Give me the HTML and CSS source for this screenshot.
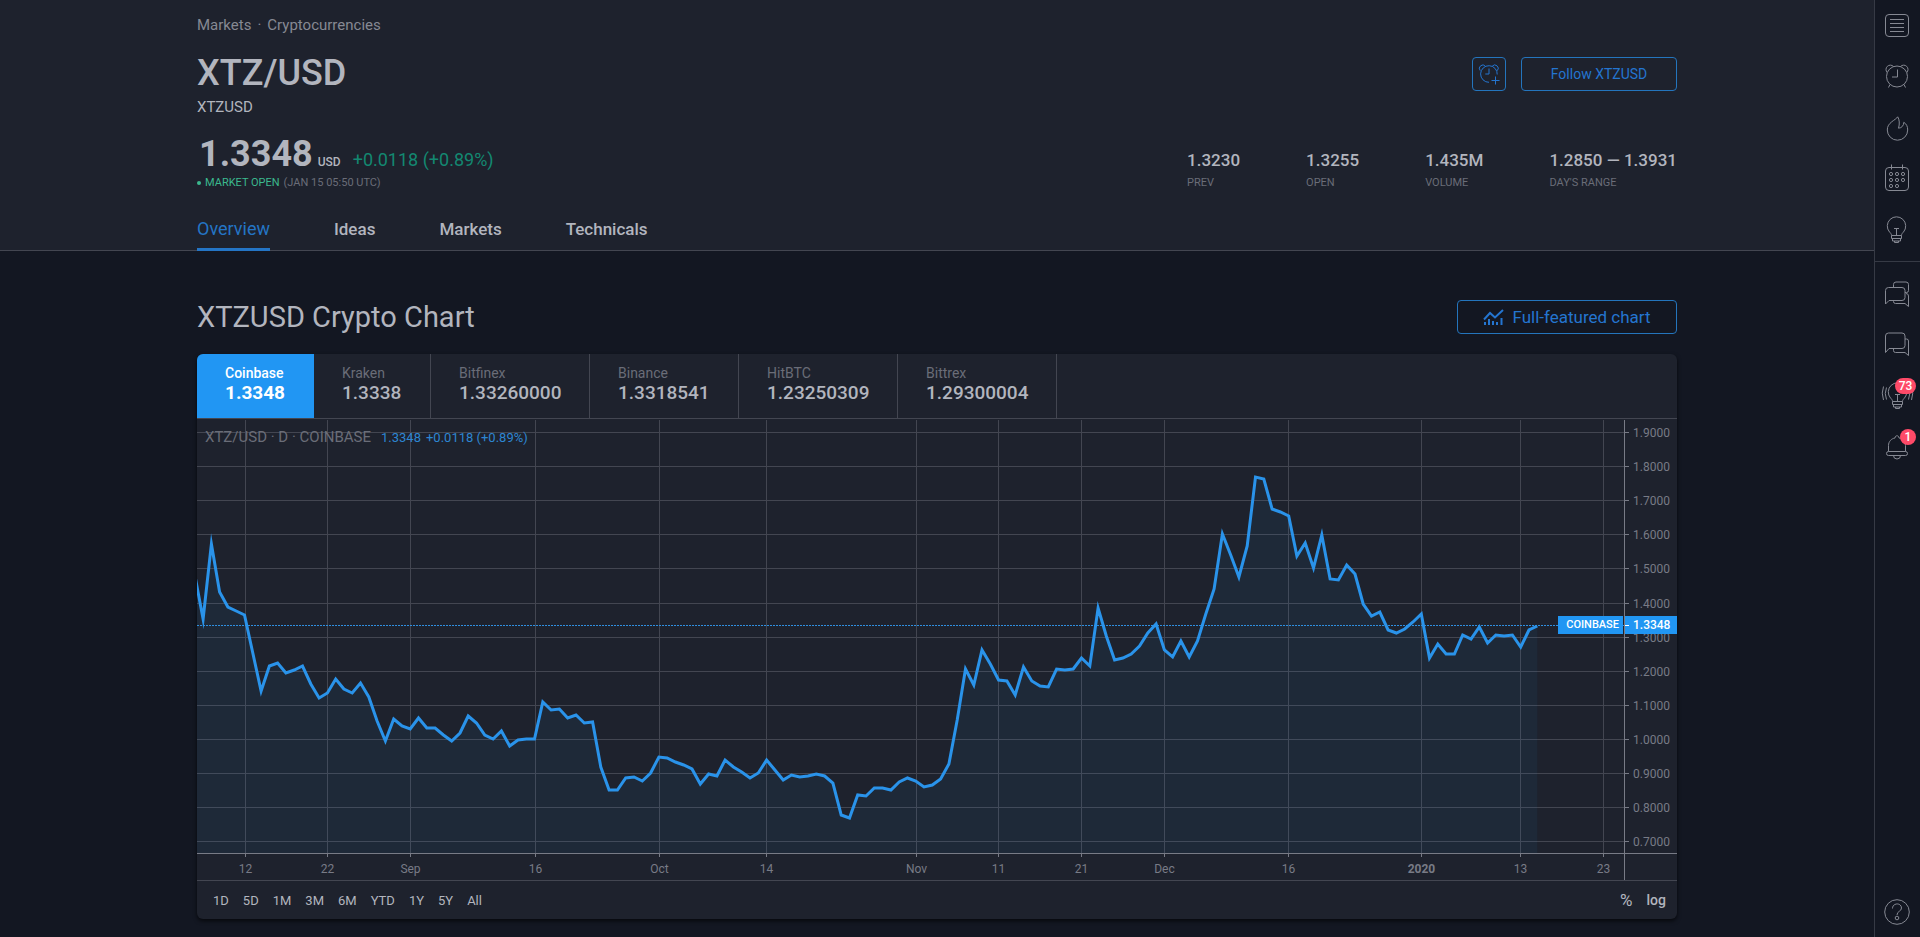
FILE: index.html
```html
<!DOCTYPE html>
<html lang="en">
<head>
<meta charset="utf-8">
<title>XTZ/USD</title>
<link rel="stylesheet" href="styles.css">
</head>
<body>
<div class="page">
  <div class="content">
    <header class="header">
      <div class="container">
        <nav class="breadcrumbs" aria-label="Breadcrumbs"><a href="#">Markets</a><span>·</span><a href="#">Cryptocurrencies</a></nav>
        <div class="title-row">
          <h1 class="title">XTZ/USD</h1>
          <div class="actions">
            <button class="btn btn-icon" type="button" aria-label="Create alert">
              <svg class="icon" width="24" height="24" viewBox="0 0 24 24"><path d="M3.2 8.6A3.4 3.4 0 1 1 8.4 4.2M15.2 4.2a3.4 3.4 0 1 1 5.2 4.4M12 20.300A8.300 8.300 0 1 1 20.200 12.500M12 6.500v5.500H8.300M18.500 14.500v8M14.500 18.500h8"/></svg>
            </button>
            <button class="btn btn-follow" type="button">Follow XTZUSD</button>
          </div>
        </div>
        <div class="subtitle">XTZUSD</div>
        <div class="quote-row">
          <div class="quote">
            <div class="quote-line"><span class="last">1.3348</span><span class="currency">USD</span><span class="change">+0.0118 (+0.89%)</span></div>
            <div class="status"><span class="dot"></span><span class="open">MARKET OPEN</span><span>(JAN 15 05:50 UTC)</span></div>
          </div>
          <dl class="stats">
            <div class="stat"><dd>1.3230</dd><dt>PREV</dt></div>
            <div class="stat"><dd>1.3255</dd><dt>OPEN</dt></div>
            <div class="stat"><dd>1.435M</dd><dt>VOLUME</dt></div>
            <div class="stat"><dd>1.2850 — 1.3931</dd><dt>DAY'S RANGE</dt></div>
          </dl>
        </div>
        <nav class="tabs" aria-label="Sections">
          <a class="tab active" href="#">Overview</a>
          <a class="tab" href="#">Ideas</a>
          <a class="tab" href="#">Markets</a>
          <a class="tab" href="#">Technicals</a>
        </nav>
      </div>
    </header>
    <main class="container">
      <div class="section-head">
        <h2 class="section-title">XTZUSD Crypto Chart</h2>
        <button class="btn btn-full" type="button">
          <svg width="21" height="17" viewBox="0 0 21 17"><path class="chart-line" d="M1 10.500L7 4l5 4.500L20 1"/><path class="chart-bars" d="M2 13v3M6 10v6M10 12v4M14 13v3M18.500 9v7"/></svg>
          Full-featured chart
        </button>
      </div>
      <section class="card">
        <div class="exchanges">
          <button class="exchange short selected" type="button"><span>Coinbase</span><b>1.3348</b></button>
          <button class="exchange short" type="button"><span>Kraken</span><b>1.3338</b></button>
          <button class="exchange long" type="button"><span>Bitfinex</span><b>1.33260000</b></button>
          <button class="exchange medium" type="button"><span>Binance</span><b>1.3318541</b></button>
          <button class="exchange long" type="button"><span>HitBTC</span><b>1.23250309</b></button>
          <button class="exchange long" type="button"><span>Bittrex</span><b>1.29300004</b></button>
        </div>
        <div class="chart">
          <div class="plot">
            <svg id="plot" width="100%" height="433"></svg>
            <div class="legend"><span class="legend-name">XTZ/USD · D · COINBASE</span><span>1.3348</span><span>+0.0118 (+0.89%)</span></div>
            <span class="tag tag-name">COINBASE</span>
          </div>
          <div class="price-axis">
            <svg id="prices" width="100%" height="433"></svg>
            <span class="tag tag-price">1.3348</span>
          </div>
          <div class="time-axis"><svg id="dates" width="100%" height="26"></svg></div>
          <div class="corner"></div>
        </div>
        <div class="ranges">
          <button type="button">1D</button><button type="button">5D</button><button type="button">1M</button><button type="button">3M</button><button type="button">6M</button><button type="button">YTD</button><button type="button">1Y</button><button type="button">5Y</button><button type="button">All</button>
          <button class="percent" type="button">%</button><button class="log" type="button">log</button>
        </div>
      </section>
    </main>
  </div>
  <aside class="sidebar">
    <button type="button" aria-label="Watchlist"><svg class="icon" width="36" height="36" viewBox="0 0 36 36"><rect x="6.500" y="6.500" width="23" height="22" rx="3.500"/><path d="M11 11.500h14M11 15.500h14M11 19.500h14M11 23.500h14"/></svg></button>
    <button type="button" aria-label="Alerts"><svg class="icon" width="36" height="36" viewBox="0 0 36 36"><circle cx="18" cy="17.500" r="10.500"/><path d="M8.200 13.500A4.300 4.300 0 1 1 14.500 7.500M21.500 7.500A4.300 4.300 0 1 1 27.800 13.500M11 25.500l-1.500 3M25 25.500l1.500 3M18.500 10.500v7.500h-5.500"/></svg></button>
    <button type="button" aria-label="Hotlists"><svg class="icon" width="36" height="36" viewBox="0 0 36 36"><path d="M18.700 6.800C17 10 8 12.500 8.300 20a10.200 10.200 0 0 0 20.400 0C28.700 16.500 27.500 14 24.800 12.300 24.800 15.500 22.800 18 19.500 18.200 20.800 14 20.500 9.500 18.700 6.800z"/></svg></button>
    <button type="button" aria-label="Calendar"><svg class="icon" width="36" height="36" viewBox="0 0 36 36"><rect x="6.500" y="6.500" width="23" height="23" rx="3.500"/><path d="M12.500 3.500v5M23.500 3.500v5"/><circle cx="12" cy="13" r="1.600"/><circle cx="18" cy="13" r="1.600"/><circle cx="24" cy="13" r="1.600"/><circle cx="12" cy="19" r="1.600"/><circle cx="18" cy="19" r="1.600"/><circle cx="24" cy="19" r="1.600"/><circle cx="12" cy="25" r="1.600"/><circle cx="18" cy="25" r="1.600"/></svg></button>
    <button type="button" aria-label="My ideas"><svg class="icon" width="36" height="36" viewBox="0 0 36 36"><path d="M12.500 23.500c0-1.500-1-2.500-2-3.500a9.200 9.200 0 1 1 14 0c-1 1-2 2-2 3.500zM12.500 23.500v3h10v-3M13.500 26.500v2.500h8v-2.500M15.500 29v1.500h4V29M15 16.500h5M17.500 16.500v7"/></svg></button>
    <hr>
    <button type="button" aria-label="Public chats"><svg class="icon" width="36" height="36" viewBox="0 0 36 36"><path d="M6.500 28V14.500a3 3 0 0 1 3-3h13.500a3 3 0 0 1 3 3v7a3 3 0 0 1-3 3H10zM14.500 11.500V8.500a2.500 2.500 0 0 1 2.500-2.500h10a2.500 2.500 0 0 1 2.500 2.500v6a2 2 0 0 1-2 2H26M27 17.500a2.500 2.500 0 0 1 2.500 2.500v10.500L26 27.500h-9.500a2 2 0 0 1-2-2v-1"/></svg></button>
    <button type="button" aria-label="Private chats"><svg class="icon" width="36" height="36" viewBox="0 0 36 36"><path d="M6.500 25.500V9a3 3 0 0 1 3-3H23a3 3 0 0 1 3 3v9.500a3 3 0 0 1-3 3H10zM26 12h1.500a2 2 0 0 1 2 2v14.500L26 25.500h-9.500a2 2 0 0 1-2-2v-2"/></svg></button>
    <button type="button" aria-label="Ideas stream"><svg class="icon" width="36" height="36" viewBox="0 0 36 36"><path d="M13.500 23.500c0-1.500-1-2.500-2-3.500a9.200 9.200 0 1 1 14 0c-1 1-2 2-2 3.500zM13.500 23.500v3h10v-3M14.500 26.500v2.500h8v-2.500M16.500 29v1.500h4V29M16 16.500h5M18.500 16.500v7M7.500 9.500q-2.500 6 0 12M4.500 8.500q-2.500 6.500 0 13.500M29.500 9.500q2.500 6 0 12M32.500 8.500q2.500 6.500 0 13.500"/></svg><span class="badge">73</span></button>
    <button type="button" aria-label="Notifications"><svg class="icon" width="36" height="36" viewBox="0 0 36 36"><path d="M9.500 22.500V16.500c0-4 3-7 6.500-7.500 0-3 4-3 4 0 3.500.5 6.500 3.500 6.500 7.500v6M9.500 22.500h17a2 2 0 0 1 0 4h-17a2 2 0 0 1 0-4zM14.500 26.500a3.500 3.500 0 0 0 7 0"/></svg><span class="badge badge-round">1</span></button>
    <button class="help" type="button" aria-label="Help"><svg class="icon" width="36" height="36" viewBox="0 0 36 36"><circle cx="18" cy="18" r="12.300"/><path d="M13.500 14.500c0-6 9-6 9-.5 0 3.500-4.500 3-4.500 7"/><circle cx="18" cy="24" r="1.800"/></svg></button>
  </aside>
</div>
<script src="chart.js"></script>
</body>
</html>
```
FILE: styles.css
```css
* { box-sizing: border-box; }
body {
  margin: 0;
  background: #131722;
  color: #b2b5be;
  font-family: "Trebuchet MS", Roboto, sans-serif;
  font-size: 14px;
}
button { margin: 0; padding: 0; border: 0; background: none; color: inherit; font: inherit; cursor: pointer; }
a { color: inherit; text-decoration: none; }
.page { display: flex; min-height: 100vh; }
.content { flex: 1; min-width: 0; }
.container { max-width: 1480px; margin: 0 auto; }
.icon { display: block; fill: none; stroke: currentColor; stroke-width: 1; }

.header { background: #1e222d; border-bottom: 1px solid #434651; }
.breadcrumbs { display: flex; gap: 6px; padding-top: 15px; color: #868993; font-size: 15px; line-height: 20px; }
.title-row { display: flex; justify-content: space-between; padding-top: 18px; }
.title { margin: 0; font-size: 36px; font-weight: 500; line-height: 40px; }
.actions { display: flex; gap: 15px; padding-top: 4px; }
.btn { display: flex; align-items: center; justify-content: center; height: 34px; border: 1px solid #2475bd; border-radius: 4px; color: #2475d0; }
.btn-icon { width: 34px; }
.btn-follow { width: 156px; }
.subtitle { padding-top: 4px; font-size: 15px; line-height: 20px; }
.quote-row { display: flex; justify-content: space-between; align-items: flex-end; padding-top: 17px; }
.quote-line { display: flex; align-items: baseline; line-height: 20px; }
.last { padding-left: 2px; font-size: 36px; font-weight: 700; line-height: 40px; }
.currency { margin-left: 5px; font-size: 12px; font-weight: 500; }
.change { margin-left: 12px; color: #138871; font-size: 18px; }
.status { display: flex; align-items: center; gap: 4px; color: #6a6d78; font-size: 11px; line-height: 17px; }
.dot { width: 4px; height: 4px; border-radius: 50%; background: #3bb98e; }
.open { color: #3bb98e; }
.stats { display: flex; gap: 66px; margin: 0; }
.stat dd { margin: 0; font-size: 17px; font-weight: 500; line-height: 28px; }
.stat dt { color: #6a6d78; font-size: 11px; line-height: 17px; }
.tabs { display: flex; gap: 64px; padding-top: 21px; }
.tab { height: 39px; margin-bottom: -1px; font-size: 17px; font-weight: 500; line-height: 34px; }
.tab.active { border-bottom: 3px solid #2475c5; color: #2475c5; font-size: 18px; font-weight: 400; }

.section-head { display: flex; justify-content: space-between; padding-top: 49px; }
.section-title { margin: 0; font-size: 29px; font-weight: 400; line-height: 34px; }
.btn-full { gap: 8px; width: 220px; font-size: 17px; }
.chart-line { fill: none; stroke: currentColor; stroke-width: 2; }
.chart-bars { fill: none; stroke: currentColor; stroke-width: 2; }

.card { margin: 20px 0 16px; border-radius: 6px; background: #1e222d; box-shadow: 0 2px 4px #000000aa; overflow: hidden; }
.exchanges { display: flex; border-bottom: 1px solid #434651; }
.exchange { height: 64px; padding: 0 0 4px 28px; border-right: 1px solid #434651; text-align: left; }
.exchange.selected { border-right: 0; background: #2196f3; color: #fff; }
.exchange.short { width: 117px; }
.exchange.medium { width: 149px; }
.exchange.long { width: 159px; }
.exchange span { display: block; color: #6a6d78; line-height: 18px; }
.exchange.selected span { color: #fff; font-weight: 500; }
.exchange b { display: block; font-size: 19px; font-weight: 500; line-height: 22px; }
.exchange.selected b { font-weight: 700; }

.chart { display: grid; grid-template-columns: 1fr 53px; padding-top: 1px; }
.chart svg { display: block; }
.plot, .price-axis { position: relative; border-bottom: 1px solid #787b86; }
.price-axis, .corner { border-left: 1px solid #787b86; }
.plot { min-width: 0; }
.grid { stroke: #434651; stroke-width: 1; shape-rendering: crispEdges; }
.tick { stroke: #787b86; stroke-width: 1; shape-rendering: crispEdges; }
.area { fill: #2196f3; fill-opacity: 0.06; }
.series { fill: none; stroke: #2a93ea; stroke-width: 3; stroke-miterlimit: 10; vector-effect: non-scaling-stroke; }
.current { stroke: #2f8fe0; stroke-width: 1; stroke-dasharray: 2 1; shape-rendering: crispEdges; }
.axis-label { fill: #787b86; font-size: 12px; }
.axis-label.year { font-weight: 700; }
.time-axis .axis-label { text-anchor: middle; }
.legend { position: absolute; top: 6px; left: 8px; display: flex; align-items: baseline; gap: 5px; color: #2d86d2; font-size: 13px; line-height: 22px; }
.legend-name { margin-right: 5px; color: #6a6d78; font-size: 15px; }
.tag { position: absolute; top: 196px; height: 18px; background: #2196f3; color: #fff; font-size: 12px; font-weight: 500; line-height: 18px; }
.tag-name { right: 1px; padding: 0 4px 0 8px; font-size: 11px; }
.tag-price { left: 0; right: 0; padding-left: 8px; }
.tag-price::before { content: ""; position: absolute; top: 9px; left: 0; width: 4px; border-top: 1px solid #fff; }
.ranges { display: flex; align-items: center; gap: 14px; height: 39px; padding: 0 11px 0 16px; border-top: 1px solid #434651; font-size: 13px; }
.percent { margin-left: auto; font-size: 17px; }
.log { font-size: 14px; font-weight: 500; }

.sidebar { display: flex; flex-direction: column; width: 46px; border-left: 1px solid #363a45; color: #868993; }
.sidebar button { position: relative; display: flex; align-items: center; justify-content: center; height: 51px; padding-right: 1px; }
.sidebar hr { width: 100%; margin: 6px 0; border: 0; border-top: 1px solid #363a45; }
.sidebar .help { margin-top: auto; }
.badge { position: absolute; top: 8px; left: 20px; min-width: 21px; border-radius: 8px; background: #ff4a68; color: #fff; font-size: 12px; font-weight: 500; line-height: 16px; text-align: center; }
.badge-round { left: 25px; min-width: 16px; }
```
FILE: chart.js
```javascript
const WIDTH = 1427;
const HEIGHT = 433;
const DAY = 8.287;
const FIRST = 47.5 - 6 * DAY;

// Line heights for each day from 6 Aug to 15 Jan, in plot units from the top.
const series = [
  155, 199, 124, 172, 187, 191, 195, 233, 271, 246, 243, 253, 250, 246, 264, 278,
  273, 259, 269, 273, 263, 277, 301, 321, 299, 306, 309, 298, 308, 308, 315, 321,
  313, 296, 303, 315, 319, 311, 326, 320, 319, 319, 282, 290, 289, 298, 295, 303,
  302, 347, 370, 370, 358, 357, 361, 353, 337, 338, 342, 345, 349, 364, 354, 356,
  340, 347, 352, 358, 353, 340, 350, 360, 355, 357, 356, 354, 356, 363, 395, 398,
  375, 376, 368, 368, 370, 362, 358, 361, 367, 365, 359, 344, 300, 249, 265, 230,
  244, 260, 261, 275, 247, 261, 266, 267, 249, 250, 249, 238, 246, 188, 216, 240,
  238, 234, 226, 213, 204, 230, 237, 221, 237, 221, 194, 169, 114, 135, 157, 126,
  57, 59, 89, 92, 96, 136, 123, 148, 115, 159, 160, 145, 154, 184, 196, 192,
  210, 213, 209, 202, 194, 238, 224, 234, 234, 215, 219, 207, 223, 215, 216, 215,
  227, 210, 206
];

const dates = [
  [48, "12"], [130, "22"], [213, "Sep"], [338, "16"], [462, "Oct"], [569, "14"],
  [719, "Nov"], [801, "11"], [884, "21"], [967, "Dec"], [1091, "16"],
  [1224, "2020"], [1323, "13"], [1406, "23"]
];

const percent = x => ((x + 0.5) / WIDTH * 100).toFixed(3) + "%";
const priceY = i => Math.round(12 + i * 34.1) + 0.5;

let grid = "";
let prices = "";
for (let i = 0; i <= 12; i++) {
  const y = priceY(i);
  grid += `<line class="grid" x1="0" x2="100%" y1="${y}" y2="${y}"/>`;
  prices += `<line class="tick" x1="0" x2="4" y1="${y}" y2="${y}"/>` +
    `<text class="axis-label" x="8" y="${y + 4}">${(1.9 - i * 0.1).toFixed(4)}</text>`;
}

let labels = "";
for (const [x, text] of dates) {
  const p = percent(x);
  grid += `<line class="grid" x1="${p}" x2="${p}" y1="0" y2="100%"/>`;
  labels += `<line class="tick" x1="${p}" x2="${p}" y1="0" y2="3"/>` +
    `<text class="axis-label${text === "2020" ? " year" : ""}" x="${p}" y="19">${text}</text>`;
}

const points = series.map((y, i) => `${(FIRST + i * DAY).toFixed(1)},${y}`).join(" ");
const last = FIRST + (series.length - 1) * DAY;

document.getElementById("plot").innerHTML = grid +
  `<line class="current" x1="0" x2="100%" y1="205.5" y2="205.5"/>` +
  `<svg width="100%" height="${HEIGHT}" viewBox="0 0 ${WIDTH} ${HEIGHT}" preserveAspectRatio="none">` +
  `<polygon class="area" points="${FIRST},${HEIGHT} ${points} ${last},${HEIGHT}"/>` +
  `<polyline class="series" points="${points}"/></svg>`;
document.getElementById("prices").innerHTML = prices;
document.getElementById("dates").innerHTML = labels;
```
